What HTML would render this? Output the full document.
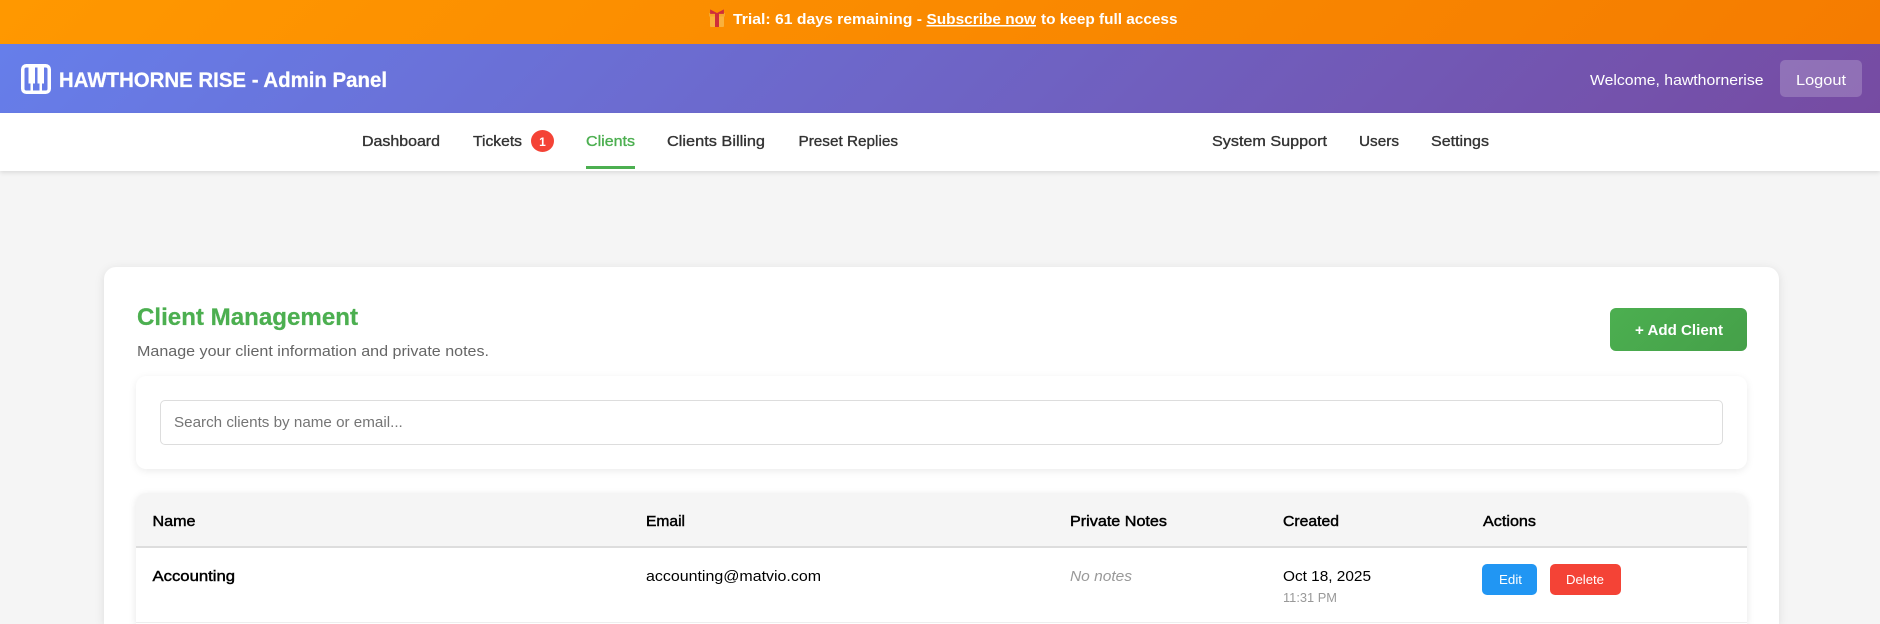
<!DOCTYPE html>
<html lang="en">
<head>
<meta charset="utf-8">
<title>Client Management - HAWTHORNE RISE</title>
<style>
*{box-sizing:border-box;margin:0;padding:0}
html,body{width:1880px;height:624px;overflow:hidden;background:#f5f5f5;font-family:"Liberation Sans",Arial,sans-serif}
#page{position:relative;width:1880px;height:624px;overflow:hidden;background:#f5f5f5}
.a{position:absolute}
#banner{left:0;top:0;width:1880px;height:44px;background:linear-gradient(135deg,#ff9800,#f57c00)}
#header{left:0;top:44px;width:1880px;height:69px;background:linear-gradient(135deg,#667eea,#764ba2)}
#logout{left:1780px;top:60px;width:82px;height:37px;background:rgba(255,255,255,.2);border-radius:5px}
#nav{left:0;top:113px;width:1880px;height:58px;background:#fff;box-shadow:0 2px 4px rgba(0,0,0,.1)}
#underline{left:586px;top:166px;width:49px;height:3px;background:#4caf50}
#badge{left:531px;top:130px;width:23px;height:22px;border-radius:50%;background:#f44336}
#card{left:104px;top:267px;width:1675px;height:357px;background:#fff;border-radius:12px 12px 0 0;box-shadow:0 2px 10px rgba(0,0,0,.1)}
#add{left:1610px;top:308px;width:137px;height:43px;border-radius:6px;background:linear-gradient(135deg,#4caf50,#45a049)}
#panel{left:136px;top:376px;width:1611px;height:93px;background:#fff;border-radius:10px;box-shadow:0 2px 8px rgba(0,0,0,.08)}
#search{left:160px;top:400px;width:1563px;height:45px;border:1px solid #ddd;border-radius:5px;padding:0 13px;font:15.2px "Liberation Sans",Arial,sans-serif;background:#fff;outline:0}
#search::placeholder{color:#757575;opacity:1}
#table{left:136px;top:493px;width:1611px;height:131px;background:#fff;border-radius:10px 10px 0 0;box-shadow:0 2px 8px rgba(0,0,0,.1)}
#thead{left:136px;top:493px;width:1611px;height:55px;background:#f5f5f5;border-bottom:2px solid #ddd;border-radius:10px 10px 0 0}
#rowline{left:136px;top:622px;width:1611px;height:1px;background:#eee}
#edit{left:1482px;top:564px;width:55px;height:31px;border-radius:5px;background:#2196f3}
#del{left:1550px;top:564px;width:71px;height:31px;border-radius:5px;background:#f44336}
#t{left:0;top:0;width:1880px;height:624px;pointer-events:none}
text{font-family:"Liberation Sans",Arial,sans-serif}
.n{font-size:15.2px;fill:#333;stroke:#333;stroke-width:.35px}
.h{font-size:15.2px;fill:#000;stroke:#000;stroke-width:.45px}
.b{font-size:15.2px;fill:#000}
</style>
</head>
<body>
<div id="page">
<div id="banner" class="a"></div>
<div id="header" class="a"></div>
<div id="logout" class="a"></div>
<div id="nav" class="a"></div>
<div id="underline" class="a"></div>
<div id="badge" class="a"></div>
<div id="card" class="a"></div>
<div id="add" class="a"></div>
<div id="panel" class="a"></div>
<input id="search" class="a" type="text" placeholder="Search clients by name or email...">
<div id="table" class="a"></div>
<div id="thead" class="a"></div>
<div id="rowline" class="a"></div>
<div id="edit" class="a"></div>
<div id="del" class="a"></div>
<svg id="t" class="a" width="1880" height="624" viewBox="0 0 1880 624" xmlns="http://www.w3.org/2000/svg">
  <!-- gift -->
  <rect x="710" y="15" width="14" height="12" rx="1" fill="#f9b13c"/>
  <rect x="709" y="13" width="16" height="3.5" fill="#f6a62c"/>
  <rect x="715" y="13" width="4" height="14" fill="#cf2f3a"/>
  <path d="M717 13.5 L710.5 10 L710.5 13.5 Z M717 13.5 L723.5 10 L723.5 13.5 Z" fill="#cf2f3a" stroke="#cf2f3a" stroke-width=".8"/>
  <text x="733" y="24" font-size="15" font-weight="700" fill="#fff" textLength="189" lengthAdjust="spacingAndGlyphs">Trial: 61 days remaining -</text>
  <text x="926.5" y="24" font-size="15" font-weight="700" fill="#fff" textLength="109.5" lengthAdjust="spacingAndGlyphs" text-decoration="underline">Subscribe now</text>
  <text x="1041" y="24" font-size="15" font-weight="700" fill="#fff" textLength="136.5" lengthAdjust="spacingAndGlyphs">to keep full access</text>

  <!-- piano -->
  <rect x="22.75" y="65.75" width="26.5" height="26.5" rx="3.5" fill="none" stroke="#fff" stroke-width="3.5"/>
  <rect x="28.5" y="66" width="6.5" height="17.5" fill="#fff"/>
  <rect x="37.5" y="66" width="6.5" height="17.5" fill="#fff"/>
  <rect x="30.5" y="83" width="2.5" height="9" fill="#fff"/>
  <rect x="39.5" y="83" width="2.5" height="9" fill="#fff"/>
  <text x="59" y="87" font-size="20.8" font-weight="700" fill="#fff" stroke="#fff" stroke-width=".25" textLength="328" lengthAdjust="spacingAndGlyphs">HAWTHORNE RISE - Admin Panel</text>
  <text x="1590" y="85" font-size="15.2" fill="#fff" textLength="173.5" lengthAdjust="spacingAndGlyphs">Welcome, hawthornerise</text>
  <text x="1796" y="85" font-size="15.2" fill="#fff" textLength="50" lengthAdjust="spacingAndGlyphs">Logout</text>

  <!-- nav -->
  <text class="n" x="362" y="146" textLength="78" lengthAdjust="spacingAndGlyphs">Dashboard</text>
  <text class="n" x="473" y="146" textLength="49" lengthAdjust="spacingAndGlyphs">Tickets</text>
  <text x="542.5" y="146" font-size="12" font-weight="700" fill="#fff" text-anchor="middle">1</text>
  <text class="n" x="586" y="146" textLength="49" lengthAdjust="spacingAndGlyphs" style="fill:#4caf50;stroke:#4caf50">Clients</text>
  <text class="n" x="667" y="146" textLength="98" lengthAdjust="spacingAndGlyphs">Clients Billing</text>
  <text class="n" x="798.5" y="146" textLength="99.5" lengthAdjust="spacingAndGlyphs">Preset Replies</text>
  <text class="n" x="1212" y="146" textLength="115" lengthAdjust="spacingAndGlyphs">System Support</text>
  <text class="n" x="1359" y="146" textLength="40" lengthAdjust="spacingAndGlyphs">Users</text>
  <text class="n" x="1431" y="146" textLength="58" lengthAdjust="spacingAndGlyphs">Settings</text>

  <!-- card heading -->
  <text x="137" y="325" font-size="24" font-weight="700" fill="#4caf50" stroke="#4caf50" stroke-width=".25" textLength="221" lengthAdjust="spacingAndGlyphs">Client Management</text>
  <text x="137" y="356" font-size="15.2" fill="#666" textLength="352" lengthAdjust="spacingAndGlyphs">Manage your client information and private notes.</text>
  <text x="1635" y="335" font-size="14.4" font-weight="700" fill="#fff" textLength="88" lengthAdjust="spacingAndGlyphs">+ Add Client</text>

  <!-- table head -->
  <text class="h" x="152.5" y="526" textLength="43" lengthAdjust="spacingAndGlyphs">Name</text>
  <text class="h" x="646" y="526" textLength="39" lengthAdjust="spacingAndGlyphs">Email</text>
  <text class="h" x="1070" y="526" textLength="97" lengthAdjust="spacingAndGlyphs">Private Notes</text>
  <text class="h" x="1283" y="526" textLength="56" lengthAdjust="spacingAndGlyphs">Created</text>
  <text class="h" x="1483" y="526" textLength="53" lengthAdjust="spacingAndGlyphs">Actions</text>

  <!-- row -->
  <text class="h" x="152.5" y="581" textLength="82.5" lengthAdjust="spacingAndGlyphs">Accounting</text>
  <text class="b" x="646" y="581" textLength="175" lengthAdjust="spacingAndGlyphs">accounting@matvio.com</text>
  <text x="1070" y="581" font-size="15.2" font-style="italic" fill="#999" textLength="62" lengthAdjust="spacingAndGlyphs">No notes</text>
  <text class="b" x="1283" y="581" textLength="88" lengthAdjust="spacingAndGlyphs">Oct 18, 2025</text>
  <text x="1283" y="602" font-size="13" fill="#999" textLength="54" lengthAdjust="spacingAndGlyphs">11:31 PM</text>
  <text x="1499" y="584" font-size="12.5" fill="#fff" textLength="23" lengthAdjust="spacingAndGlyphs">Edit</text>
  <text x="1566" y="584" font-size="12.5" fill="#fff" textLength="38" lengthAdjust="spacingAndGlyphs">Delete</text>
</svg>
</div>
</body>
</html>
